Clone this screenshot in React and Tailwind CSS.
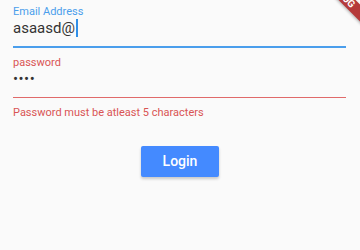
import React from 'react'

const font = { fontFamily: 'Roboto, "Noto Sans", sans-serif' }

export default function App() {
    return (
        <div className="relative w-[360px] h-[250px] overflow-hidden bg-[#fafafa] text-[#212121]" style={font}>
            <div className="pl-[13px] pr-[14px] pt-[4px]">
                {/* email field, focused */}
                <div className="border-b-2 border-[#4a9eec] pb-[9px]">
                    <div className="text-[11px] leading-[15px] text-[#4a9eec]">Email Address</div>
                    <div className="flex items-center text-[15px] leading-[16px] text-[#333]">
                        <span>asaasd@</span>
                        <span className="ml-[1px] inline-block w-[2px] h-[18px] bg-[#2f8fe8]" />
                    </div>
                </div>

                {/* password field, error */}
                <div className="mt-[7px] border-b border-[#e06a6a] pb-[10px]">
                    <div className="text-[11px] leading-[15px] text-[#d95454]">password</div>
                    <div className="mt-[1px] text-[15px] leading-[16px] text-[#333] tracking-[0.5px]">••••</div>
                </div>
                <div className="mt-[7px] text-[11px] leading-[15px] text-[#d95454]">
                    Password must be atleast 5 characters
                </div>

                <div className="mt-[26px] flex justify-center pl-[1px]">
                    <button className="w-[78px] h-[31px] rounded-[2px] bg-[#448aff] text-white text-[14px] font-medium shadow-[0_2px_3px_rgba(0,0,0,0.2)]">
                        Login
                    </button>
                </div>
            </div>

            {/* debug banner */}
            <div className="absolute left-[292px] top-[-11px] w-[100px] h-[12px] rotate-45 bg-[#b53a3a] shadow-[0_1px_3px_rgba(0,0,0,0.3)] flex items-center justify-center">
                <span className="text-[10px] leading-[12px] font-bold text-white">DEBUG</span>
            </div>
        </div>
    )
}
